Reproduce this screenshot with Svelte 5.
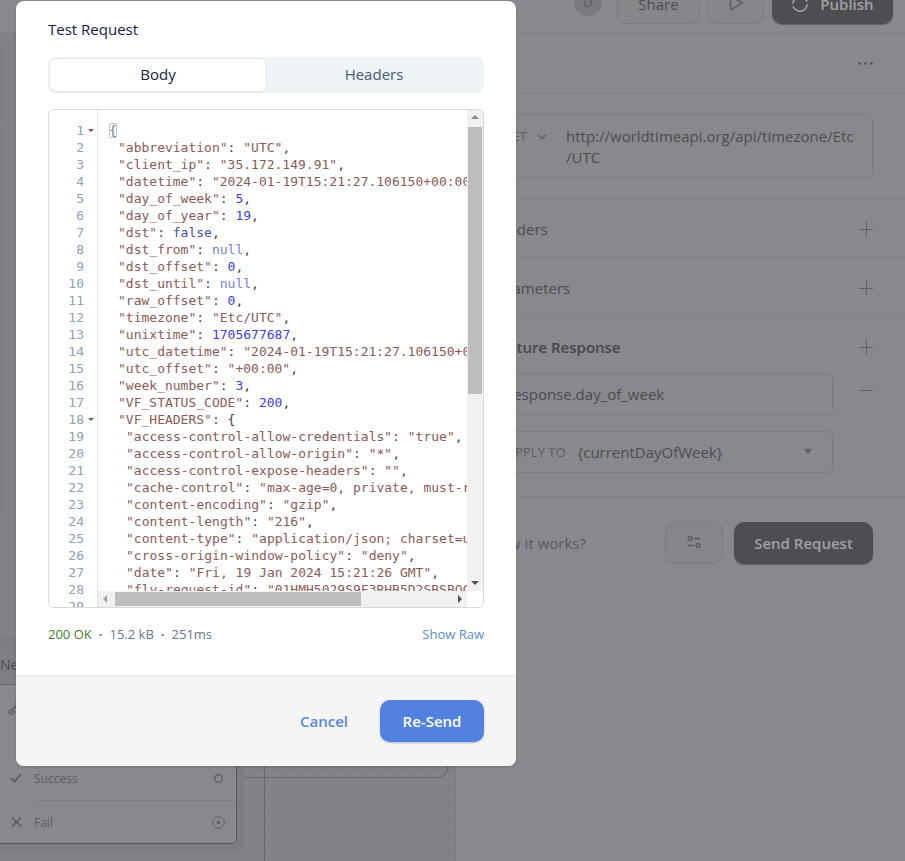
<script>
  const lines = [
    [['k','{']],
    [['i',1],['s','"abbreviation"'],['p',': '],['s','"UTC"'],['p',',']],
    [['i',1],['s','"client_ip"'],['p',': '],['s','"35.172.149.91"'],['p',',']],
    [['i',1],['s','"datetime"'],['p',': '],['s','"2024-01-19T15:21:27.106150+00:00"'],['p',',']],
    [['i',1],['s','"day_of_week"'],['p',': '],['n','5'],['p',',']],
    [['i',1],['s','"day_of_year"'],['p',': '],['n','19'],['p',',']],
    [['i',1],['s','"dst"'],['p',': '],['b','false'],['p',',']],
    [['i',1],['s','"dst_from"'],['p',': '],['u','null'],['p',',']],
    [['i',1],['s','"dst_offset"'],['p',': '],['n','0'],['p',',']],
    [['i',1],['s','"dst_until"'],['p',': '],['u','null'],['p',',']],
    [['i',1],['s','"raw_offset"'],['p',': '],['n','0'],['p',',']],
    [['i',1],['s','"timezone"'],['p',': '],['s','"Etc/UTC"'],['p',',']],
    [['i',1],['s','"unixtime"'],['p',': '],['n','1705677687'],['p',',']],
    [['i',1],['s','"utc_datetime"'],['p',': '],['s','"2024-01-19T15:21:27.106150+00:00"'],['p',',']],
    [['i',1],['s','"utc_offset"'],['p',': '],['s','"+00:00"'],['p',',']],
    [['i',1],['s','"week_number"'],['p',': '],['n','3'],['p',',']],
    [['i',1],['s','"VF_STATUS_CODE"'],['p',': '],['n','200'],['p',',']],
    [['i',1],['s','"VF_HEADERS"'],['p',': {']],
    [['i',2],['s','"access-control-allow-credentials"'],['p',': '],['s','"true"'],['p',',']],
    [['i',2],['s','"access-control-allow-origin"'],['p',': '],['s','"*"'],['p',',']],
    [['i',2],['s','"access-control-expose-headers"'],['p',': '],['s','""'],['p',',']],
    [['i',2],['s','"cache-control"'],['p',': '],['s','"max-age=0, private, must-revalidate"'],['p',',']],
    [['i',2],['s','"content-encoding"'],['p',': '],['s','"gzip"'],['p',',']],
    [['i',2],['s','"content-length"'],['p',': '],['s','"216"'],['p',',']],
    [['i',2],['s','"content-type"'],['p',': '],['s','"application/json; charset=utf-8"'],['p',',']],
    [['i',2],['s','"cross-origin-window-policy"'],['p',': '],['s','"deny"'],['p',',']],
    [['i',2],['s','"date"'],['p',': '],['s','"Fri, 19 Jan 2024 15:21:26 GMT"'],['p',',']],
    [['i',2],['s','"fly-request-id"'],['p',': '],['s','"01HMH5029S9F3RHB5D2SBSBOCK"'],['p',',']],
    [['i',2],['s','"server"'],['p',': '],['s','"Fly/ba9e227a"'],['p',',']],
  ];
</script>

<div class="app">
  <header class="topbar">
    <span class="avatar">D</span>
    <button class="ghost share">Share</button>
    <button class="ghost play" aria-label="Run">
      <svg width="16" height="18" viewBox="0 0 16 18" fill="none" stroke="#5b5c60" stroke-width="1.4" stroke-linejoin="round"><path d="M2.5 2.2v13.6L14.500 9z"/></svg>
    </button>
    <button class="dark publish">
      <svg width="18" height="18" viewBox="0 0 18 18" fill="none" stroke="#a9aaad" stroke-width="1.5" stroke-linecap="round"><path d="M2 8a7 7 0 0 1 12-4l2 2M16 10a7 7 0 0 1-12 4l-2-2"/></svg>
      Publish
    </button>
  </header>

  <div class="main">
    <section class="canvas">
      <div class="wire-v"></div>
      <div class="wire-h"></div>
      <div class="side-block one"></div>
      <div class="side-block two"></div>
      <div class="node">
        <div class="node-head"><span>New</span></div>
        <div class="node-icon">
          <svg width="14" height="16" viewBox="0 0 14 16" fill="none" stroke="#55565a" stroke-width="1.2"><circle cx="10" cy="3" r="2"/><circle cx="3" cy="12" r="2"/><path d="M9 5 4 10M5 12h7"/></svg>
        </div>
        <div class="port-row">
          <svg width="14" height="12" viewBox="0 0 14 12" fill="none" stroke="#55565a" stroke-width="1.4"><path d="m2 6 3.6 3.6L12 2"/></svg>
          <span>Success</span>
          <svg class="port" width="13" height="13" viewBox="0 0 13 13" fill="none" stroke="#5e5f63" stroke-width="1.4"><circle cx="6.500" cy="6.500" r="3.800"/></svg>
        </div>
        <div class="port-row last">
          <svg width="14" height="12" viewBox="0 0 14 12" fill="none" stroke="#55565a" stroke-width="1.4"><path d="m3 1.5 9 9M12 1.5l-9 9"/></svg>
          <span>Fail</span>
          <svg class="port" width="13" height="13" viewBox="0 0 13 13" fill="none" stroke="#5e5f63" stroke-width="1"><circle cx="6.500" cy="6.500" r="5.800"/><circle cx="6.500" cy="6.500" r="1.800" fill="#5e5f63" stroke="none"/></svg>
        </div>
      </div>
    </section>

    <aside class="panel">
      <div class="panel-head">
        <span></span>
        <svg class="dots" width="15" height="3" viewBox="0 0 15 3" fill="#55565a"><circle cx="1.5" cy="1.5" r="1.4"/><circle cx="7.5" cy="1.5" r="1.4"/><circle cx="13.5" cy="1.5" r="1.4"/></svg>
      </div>
      <div class="panel-url">
        <div class="url-box">
          <span class="method">GET
            <svg width="10" height="6" viewBox="0 0 10 6" fill="none" stroke="#5e5f63" stroke-width="1.6"><path d="m1 1 4 3.4L9 1"/></svg>
          </span>
          <span class="url">http://worldtimeapi.org/api/timezone/Etc<br/>/UTC</span>
        </div>
      </div>
      <div class="row"><span>Headers</span><span class="plus"></span></div>
      <div class="row"><span>Parameters</span><span class="plus"></span></div>
      <div class="capture">
        <div class="cap-head"><strong>Capture Response</strong><span class="plus"></span></div>
        <div class="cap-line">
          <div class="field">response.day_of_week</div>
          <span class="minus"></span>
        </div>
        <div class="field select">
          <em>APPLY TO</em><span>{'{'}currentDayOfWeek{'}'}</span>
          <b class="caret"></b>
        </div>
      </div>
      <div class="panel-foot">
        <span class="how">How it works?</span>
        <button class="ghost tune" aria-label="Settings">
          <svg width="16" height="14" viewBox="0 0 16 14" fill="none" stroke="#55565a" stroke-width="1.3"><circle cx="4" cy="3.5" r="2"/><path d="M8 3.5h6M1.500 10.500h6"/><circle cx="12" cy="10.500" r="2"/></svg>
        </button>
        <button class="dark send">Send Request</button>
      </div>
    </aside>
  </div>

  <div class="modal">
    <div class="modal-body">
      <h2>Test Request</h2>
      <div class="tabs">
        <button class="tab active">Body</button>
        <button class="tab">Headers</button>
      </div>
      <div class="editor">
        <div class="viewport">
          <div class="gutter">
            {#each lines as _, idx}
              <div class="ln">{idx + 1}{#if idx === 0 || idx === 17}<i class="fold"></i>{/if}</div>
            {/each}
          </div>
          <pre class="code">{#each lines as line}<div class="cl">{#each line as [t, v]}{#if t === 'i'}<span class={v === 1 ? 'ind1' : 'ind2'}></span>{:else if t === 'k'}<span class="brace">{v}</span>{:else}<span class={t}>{v}</span>{/if}{/each}</div>{/each}</pre>
        </div>
        <div class="vbar">
          <i class="arrow up"></i>
          <div class="vthumb"></div>
          <i class="arrow down"></i>
        </div>
        <div class="hbar">
          <i class="arrow left"></i>
          <div class="hthumb"></div>
          <i class="arrow right"></i>
        </div>
      </div>
      <div class="status">
        <span class="ok">200 OK</span><span class="sep">·</span><span>15.2 kB</span><span class="sep">·</span><span>251ms</span>
        <a class="raw" href="#raw">Show Raw</a>
      </div>
    </div>
    <footer class="modal-foot">
      <button class="cancel">Cancel</button>
      <button class="resend">Re-Send</button>
    </footer>
  </div>
</div>

<style>
  :global(body) { margin: 0; }
  * { box-sizing: border-box; }
  button { font-family: inherit; cursor: pointer; }
  .app {
    position: relative;
    width: 905px;
    height: 861px;
    overflow: hidden;
    background: #88898d;
    font-family: "Open Sans", sans-serif;
    color: #4b4c50;
  }
  .topbar {
    height: 34px;
    border-bottom: 1px solid #7d7e82;
    display: flex;
    justify-content: flex-end;
    align-items: flex-end;
    gap: 7px;
    padding: 0 12px 9px 0;
  }
  .topbar > * { flex: none; }
  .avatar {
    width: 28px; height: 28px; border-radius: 50%;
    background: #7a7b7f; color: #5e5f63;
    display: flex; align-items: center; justify-content: center;
    font-size: 13px; font-weight: 600;
    margin: 0 8px 8px 0;
  }
  .ghost {
    border: 1px solid #7a7b7f; background: #85868a; border-radius: 10px;
    color: #4b4c50;
  }
  .share { width: 83px; height: 42px; font-size: 15px; font-weight: 500; padding: 2px 0 0; }
  .play { width: 57px; height: 42px; padding: 0; display: flex; align-items: center; justify-content: center; }
  .dark { border: 0; background: #4d4e52; color: #a0a1a4; border-radius: 10px; font-weight: 600; font-size: 15px; box-shadow: 0 1px 1px #606165; }
  .publish { width: 121px; height: 42px; padding: 2px 0 0; display: flex; align-items: center; justify-content: center; gap: 11px; margin-left: 1px; }

  .main { display: flex; height: 827px; }
  .canvas {
    position: relative; width: 456px; height: 100%; flex: none;
    background-color: #828387;
    background-image: radial-gradient(circle, #75767a 0.7px, transparent 1px);
    background-size: 16px 16px;
    background-position: -7.5px -8px;
    border-right: 1px solid #7a7b7f;
  }
  .wire-v { position: absolute; left: 264px; top: 0; bottom: 0; width: 1px; background: #66676b; }
  .wire-h {
    position: absolute; left: 237px; top: 598px; width: 211px; height: 146px;
    border-right: 1.5px solid #68696d; border-bottom: 1.5px solid #68696d;
    border-bottom-right-radius: 10px;
  }
  .side-block { position: absolute; left: -10px; width: 14px; background: #7f8084; border: 1px solid #7a7b7f; border-radius: 8px; }
  .one { top: 17px; height: 70px; }
  .two { top: 93px; height: 390px; }
  .node {
    position: absolute; left: -30px; top: 610px; width: 267px; height: 200px;
    background: #88898d; border: 1px solid #5a5b5f; border-top: 0; border-radius: 0 0 5px 5px;
    box-shadow: 0 0 0 7px #7c7d81, 0 0 0 8px #7f8084;
  }
  .node-head {
    height: 41px; background: #7e7f83; border-bottom: 1px solid #66676b;
    padding: 0 0 0 29px; font-size: 14px; display: flex; align-items: center;
  }
  .node-icon { height: 71px; padding: 14px 0 0 37px; }
  .port-row {
    display: flex; align-items: center; height: 44px; padding-left: 38px; position: relative;
    font-size: 12px; color: #5b5c60;
  }
  .port-row span { margin-left: 11px; flex: 1; }
  .port-row.last::before { content: ""; position: absolute; left: 64px; right: 0; top: 0; height: 1px; background: #7e7f83; }
  .port { margin-right: 11px; }

  .panel { width: 449px; height: 100%; flex: none; }
  .panel-head {
    height: 60px; border-bottom: 1px solid #7f8084;
    display: flex; justify-content: space-between; align-items: center; padding: 0 32px 0 0;
  }
  .panel-url { height: 105px; padding: 20px 32px 0 14px; border-bottom: 1px solid #7f8084; }
  .url-box {
    display: flex; height: 64px; border: 1px solid #7a7b7f; border-radius: 6px;
    font-size: 15px; line-height: 21px; padding: 11px 0 0 44px;
    position: relative;
  }
  .method { position: absolute; left: 32px; top: 11px; font-size: 13px; color: #5b5c60; display: flex; align-items: center; gap: 10px; white-space: nowrap; }
  .url { margin-left: 51px; color: #4b4c50; white-space: nowrap; }
  .row {
    height: 59px; display: flex; justify-content: space-between; align-items: center;
    padding: 2px 32px 0 0; border-bottom: 1px solid #7f8084; font-size: 15px; color: #4b4c50;
  }
  .row > span:first-child { margin-left: 33px; }
  .plus { position: relative; width: 14px; height: 14px; flex: none; }
  .plus::before, .plus::after { content: ""; position: absolute; background: #5e5f63; }
  .plus::before { left: 0; right: 0; top: 6.5px; height: 1.4px; }
  .plus::after { top: 0; bottom: 0; left: 6.5px; width: 1.4px; }
  .capture { height: 180px; padding: 20px 32px 0 0; border-bottom: 1px solid #7f8084; }
  .cap-head { display: flex; justify-content: space-between; align-items: center; height: 20px; margin-bottom: 16px; }
  .cap-head strong { font-size: 15px; font-weight: 600; color: #45464a; margin-left: 33px; }
  .cap-line { display: flex; align-items: center; justify-content: space-between; margin-bottom: 16px; }
  .field {
    width: 377px; height: 42px; border: 1px solid #7a7b7f; border-radius: 6px;
    font-size: 15px; line-height: 40px; padding-left: 50px; color: #4b4c50;
  }
  .minus { width: 14px; height: 1.6px; background: #5e5f63; margin-bottom: 7px; }
  .select { position: relative; display: flex; align-items: center; padding-left: 50px; }
  .select em { font-style: normal; font-size: 13px; font-weight: 500; color: #5e5f63; margin-right: 12px; white-space: nowrap; }
  .select span { white-space: nowrap; }
  .caret { position: absolute; right: 20px; top: 17px; border: 4px solid transparent; border-top: 5px solid #5e5f63; border-bottom: 0; }
  .panel-foot { display: flex; align-items: center; padding: 24px 32px 0 0; }
  .how { flex: 1; font-size: 15px; color: #58595d; margin-left: 33px; white-space: nowrap; }
  .tune { width: 58px; height: 43px; margin-right: 11px; padding: 2px 0 0; }
  .send { width: 139px; height: 42px; }

  .modal {
    position: absolute; left: 16px; top: 1px; width: 500px; height: 765px;
    background: #fff; border-radius: 8px; overflow: hidden;
    display: flex; flex-direction: column;
    box-shadow: 0 1px 3px rgba(0,0,0,.16);
  }
  .modal-body { flex: 1; padding: 0 32px; }
  h2 { margin: 18px 0 0; font-size: 15px; line-height: 20px; font-weight: 500; color: #132144; }
  .tabs {
    margin-top: 18px; height: 36px; display: flex; background: #eef3f6; border-radius: 8px; padding: 2px;
  }
  .tab {
    flex: 1; border: 0; background: transparent; border-radius: 6px;
    font-size: 15px; color: #4a5a72; font-weight: 400; padding: 0 0 3px;
  }
  .tab.active { flex: 0 0 216px; background: #fff; color: #132144; box-shadow: 0 0 0 1px #e3e8ee, 0 1px 1px 1px rgba(17,49,96,.06); }

  .editor {
    position: relative; margin-top: 16px; height: 499px;
    border: 1px solid #d4d9e6; border-radius: 5px; overflow: hidden;
  }
  .viewport { position: absolute; inset: 0; display: flex; overflow: hidden; padding-top: 12px; }
  .gutter {
    flex: none; width: 49px; margin-top: -12px; padding-top: 12px; border-right: 1px solid #dfe5ed;
    font: 13px/17px "DejaVu Sans Mono", monospace; color: #8da2b5; position: relative; background: #fff;
  }
  .ln { height: 17px; text-align: right; padding-right: 13px; position: relative; }
  .fold { position: absolute; right: 3px; top: 7px; border: 3px solid transparent; border-top: 3px solid #55606e; border-bottom: 0; }
  .code {
    margin: 0; padding: 0 0 0 10px; width: 369px; overflow: hidden; flex: none;
    font: 13px/17px "DejaVu Sans Mono", monospace; color: #6e7a8a;
  }
  .cl { height: 17px; white-space: pre; }
  .ind1 { display: inline-block; width: 10px; }
  .ind2 { display: inline-block; width: 18px; }
  .s { color: #8c5a55; }
  .p { color: #3a3f4a; }
  .n { color: #3c3ce8; }
  .b { color: #3d52a8; }
  .u { color: #6f7fe8; }
  .brace {
    display: inline-block; width: 8px; height: 15px; margin: 1px 0 0 1px; vertical-align: top;
    border: 1px solid #bfc4cf; border-radius: 2px; line-height: 13px; text-indent: -1px;
  }

  .vbar { position: absolute; right: 0; top: 0; width: 16px; height: 481px; background: #f1f1f1; }
  .vthumb { position: absolute; left: 1px; right: 1px; top: 17px; height: 267px; background: #bdbdbd; }
  .hbar { position: absolute; left: 49px; bottom: 0; width: 369px; height: 16px; background: #f1f1f1; }
  .hthumb { position: absolute; left: 17px; top: 1px; bottom: 1px; width: 246px; background: #bdbdbd; }
  .arrow { position: absolute; width: 0; height: 0; border: 4px solid transparent; }
  .up { left: 4px; top: 5px; border-bottom: 4px solid #8a8a8a; border-top: 0; }
  .down { left: 4px; bottom: 6px; border-top: 4px solid #505050; border-bottom: 0; }
  .left { left: 5px; top: 4px; border-right: 4px solid #a3a3a3; border-left: 0; }
  .right { right: 5px; top: 4px; border-left: 4px solid #505050; border-right: 0; }

  .status {
    display: flex; align-items: center; margin-top: 17px; height: 17px;
    font-size: 13px; color: #62778c; white-space: nowrap;
  }
  .ok { color: #447b2e; font-weight: 500; }
  .sep { margin: 0 7px; font-weight: 700; }
  .raw { margin-left: auto; color: #5b8ad8; text-decoration: none; }

  .modal-foot {
    height: 91px; flex: none; background: #f5f5f5; border-top: 1px solid #eaeaea;
    display: flex; justify-content: flex-end; align-items: center; gap: 32px; padding: 0 32px 1px;
  }
  .cancel { border: 0; background: none; padding: 0; color: #5589e0; font-size: 15px; font-weight: 600; }
  .resend {
    width: 104px; height: 42px; border: 0; border-radius: 10px; background: #5182e0; color: #fff;
    font-size: 15px; font-weight: 600; box-shadow: 0 1px 2px rgba(19,33,68,.3);
  }
</style>
